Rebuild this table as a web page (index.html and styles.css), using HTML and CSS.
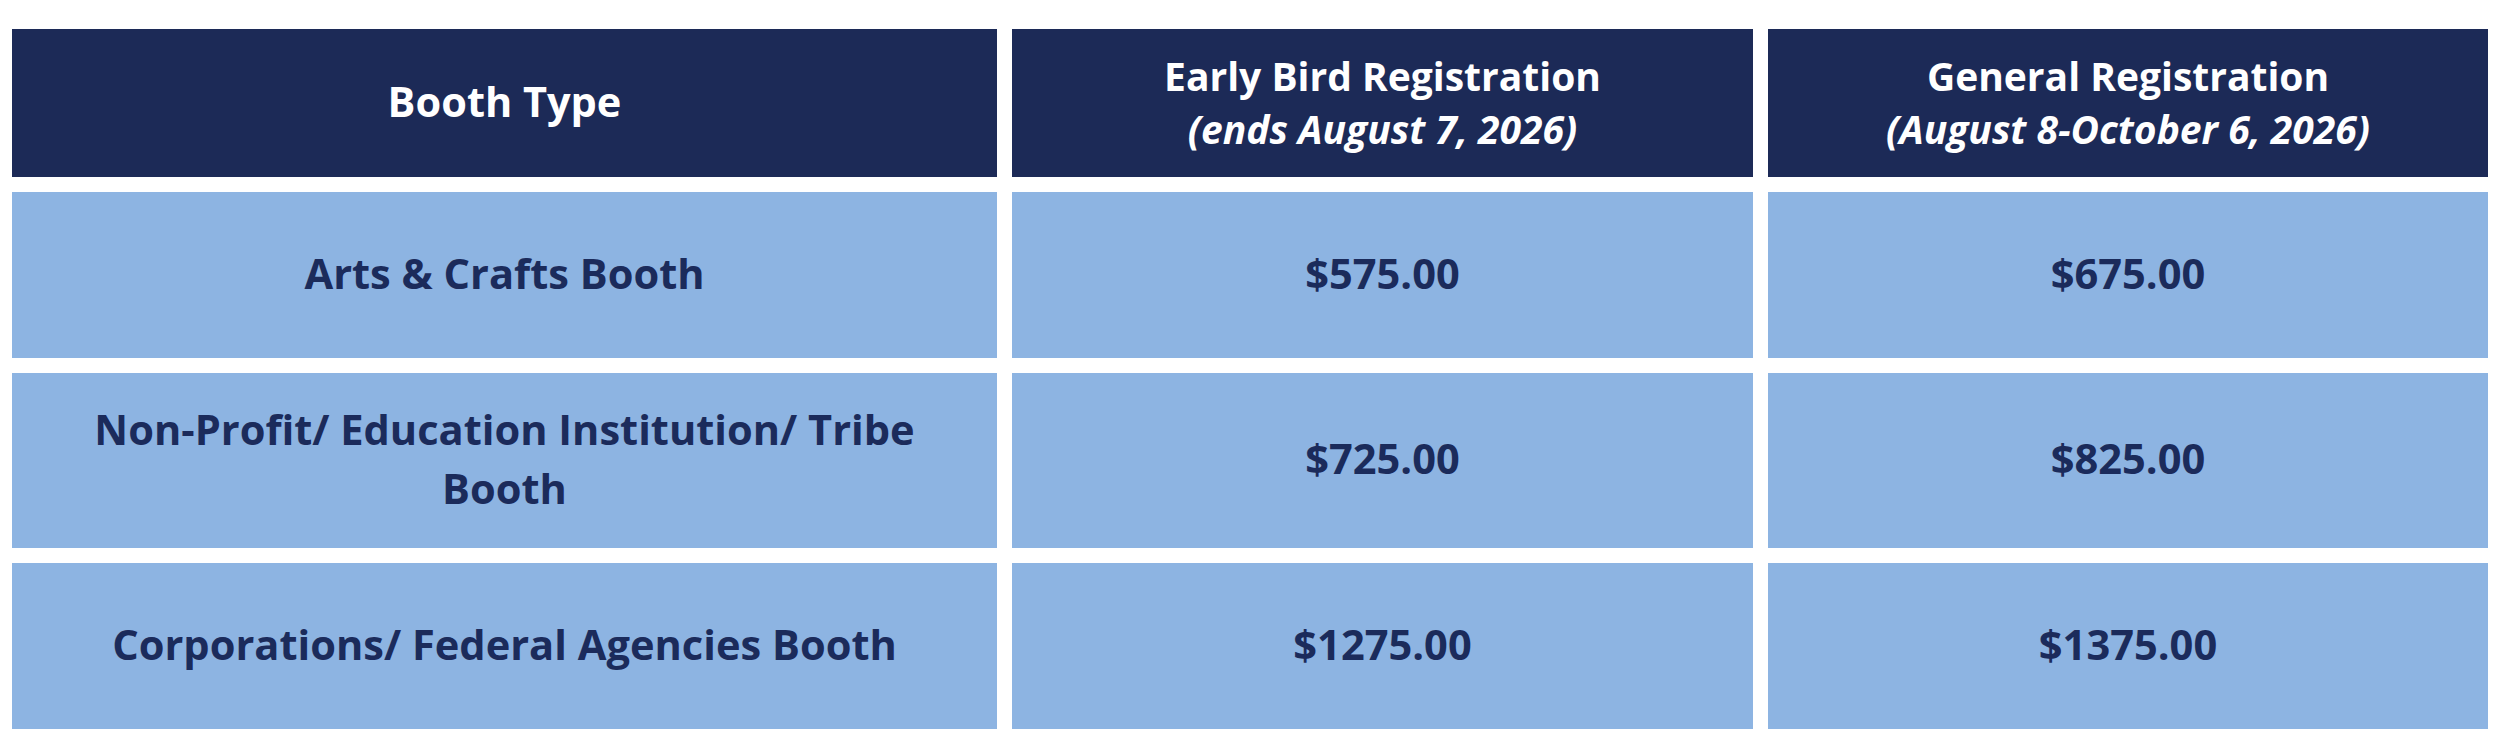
FILE: index.html
```html
<!DOCTYPE html>
<html lang="en">
<head>
<meta charset="utf-8">
<title>Booth Pricing</title>
<link rel="stylesheet" href="styles.css">
</head>
<body>
<div class="pricing">
  <div class="cell head head-main"><span>Booth Type</span></div>
  <div class="cell head"><span>Early Bird Registration<br><em>(ends August 7, 2026)</em></span></div>
  <div class="cell head"><span>General Registration<br><em>(August 8-October 6, 2026)</em></span></div>

  <div class="cell"><span>Arts &amp; Crafts Booth</span></div>
  <div class="cell"><span>$575.00</span></div>
  <div class="cell"><span>$675.00</span></div>

  <div class="cell"><span>Non-Profit/ Education Institution/ Tribe<br>Booth</span></div>
  <div class="cell"><span>$725.00</span></div>
  <div class="cell"><span>$825.00</span></div>

  <div class="cell"><span>Corporations/ Federal Agencies Booth</span></div>
  <div class="cell"><span>$1275.00</span></div>
  <div class="cell"><span>$1375.00</span></div>
</div>
</body>
</html>
```
FILE: styles.css
```css
html, body {
  margin: 0;
  padding: 0;
  background: #ffffff;
}
body {
  font-family: "Open Sans", "Noto Sans", "Liberation Sans", sans-serif;
}
.pricing {
  display: grid;
  grid-template-columns: 985px 741px 720px;
  grid-template-rows: 148px 166px 175px 166px;
  column-gap: 15px;
  row-gap: 15px;
  padding: 29px 0 0 12px;
}
.cell {
  display: flex;
  align-items: center;
  justify-content: center;
  text-align: center;
  background: #8db4e2;
  color: #1b2b5b;
  font-weight: 700;
  font-size: 41.6px;
  line-height: 59px;
  padding-bottom: 4px;
}
.head {
  background: #1c2a57;
  color: #ffffff;
  font-size: 39px;
  line-height: 53px;
  padding-bottom: 2px;
}
.head-main {
  font-size: 41.5px;
  padding-bottom: 4px;
}
.head em {
  font-style: italic;
}
```
